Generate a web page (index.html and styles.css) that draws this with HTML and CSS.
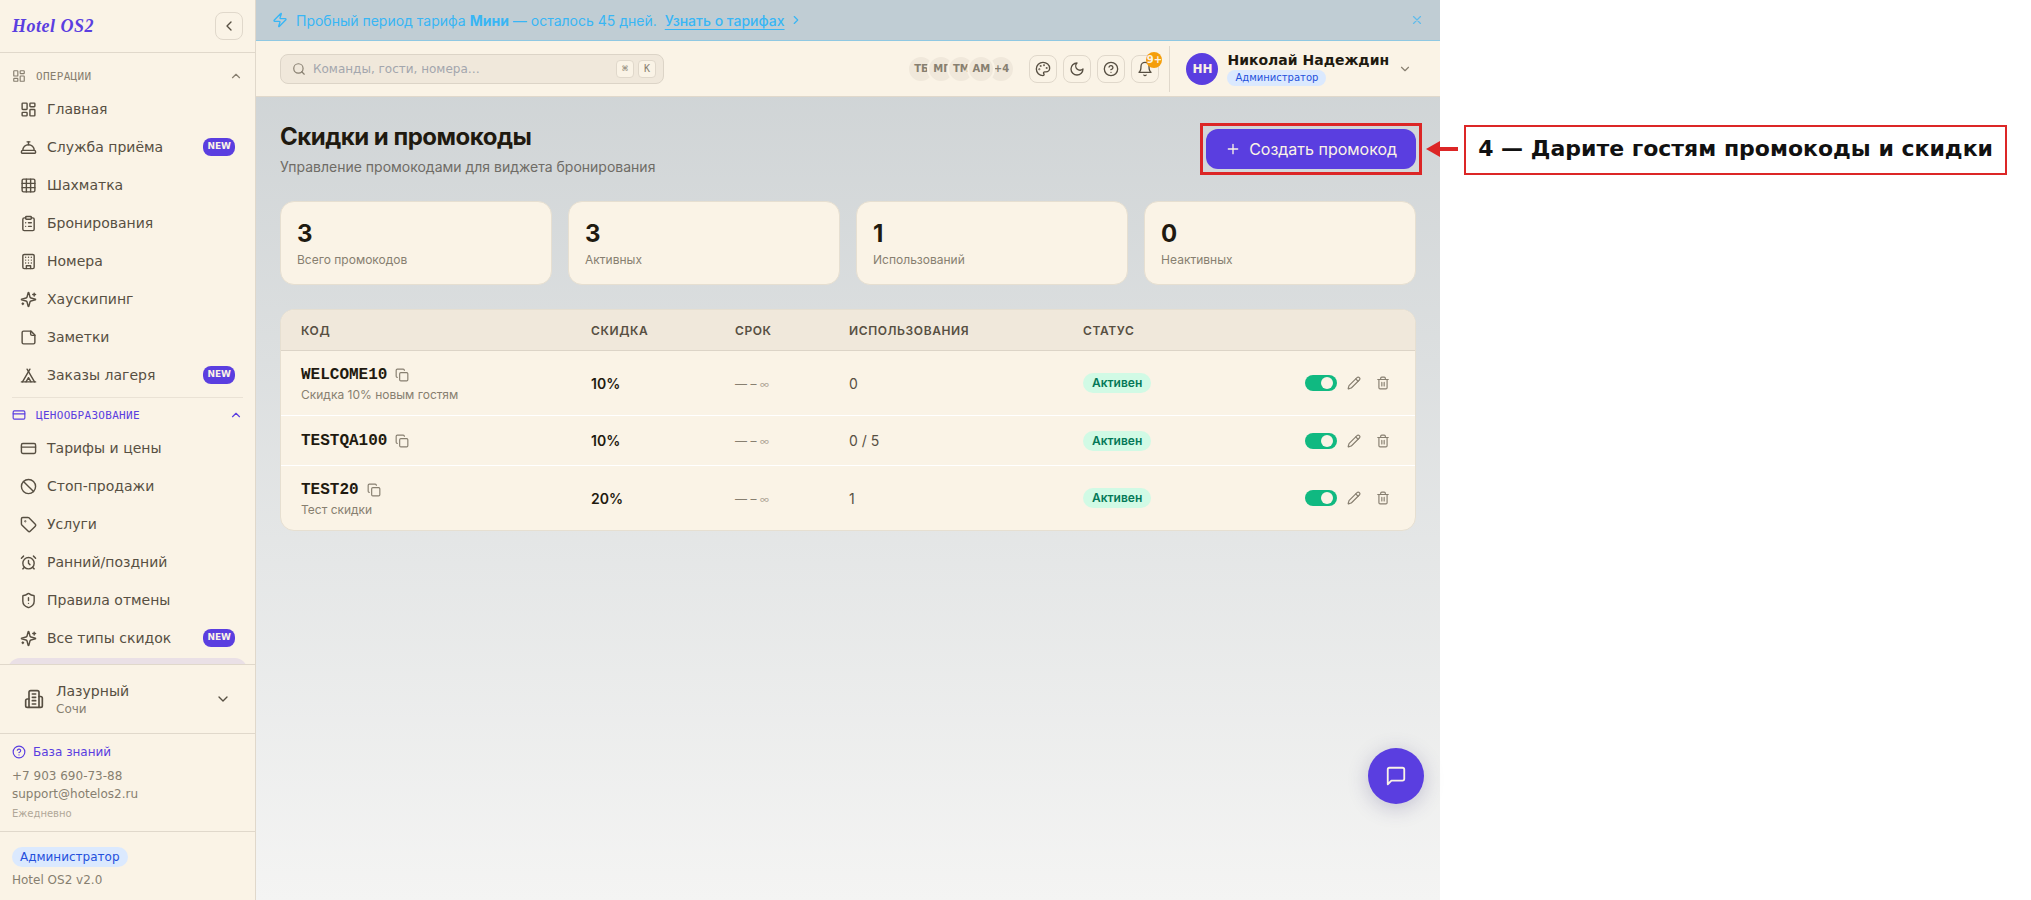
FILE: index.html
```html
<!DOCTYPE html>
<html lang="ru">
<head>
  <meta charset="UTF-8">
  <meta name="viewport" content="width=device-width, initial-scale=1.0">
  <title>Скидки и промокоды — Hotel OS2</title>
  <link rel="stylesheet" href="styles.css">
</head>
<body>
  <!-- Icon sprite -->
  <svg class="sprite" aria-hidden="true">
    <symbol id="i-dashboard" viewBox="0 0 24 24"><rect x="3" y="3" width="7" height="9" rx="1"/><rect x="14" y="3" width="7" height="5" rx="1"/><rect x="14" y="12" width="7" height="9" rx="1"/><rect x="3" y="16" width="7" height="5" rx="1"/></symbol>
    <symbol id="i-bell-service" viewBox="0 0 24 24"><path d="M3 20a1 1 0 0 1-1-1v-1a2 2 0 0 1 2-2h16a2 2 0 0 1 2 2v1a1 1 0 0 1-1 1Z"/><path d="M20 16a8 8 0 1 0-16 0"/><path d="M12 4v4"/><path d="M10 4h4"/></symbol>
    <symbol id="i-grid" viewBox="0 0 24 24"><rect x="3" y="3" width="18" height="18" rx="2"/><path d="M3 9h18M3 15h18M9 3v18M15 3v18"/></symbol>
    <symbol id="i-clipboard" viewBox="0 0 24 24"><rect x="8" y="2" width="8" height="4" rx="1"/><path d="M16 4h2a2 2 0 0 1 2 2v14a2 2 0 0 1-2 2H6a2 2 0 0 1-2-2V6a2 2 0 0 1 2-2h2"/><path d="M12 11h4M12 16h4M8 11h.01M8 16h.01"/></symbol>
    <symbol id="i-hotel" viewBox="0 0 24 24"><rect x="4" y="2" width="16" height="20" rx="2"/><path d="M9 22v-4h6v4"/><path d="M8 6h.01M16 6h.01M12 6h.01M12 10h.01M12 14h.01M16 10h.01M16 14h.01M8 10h.01M8 14h.01"/></symbol>
    <symbol id="i-sparkles" viewBox="0 0 24 24"><path d="M9.937 15.5A2 2 0 0 0 8.5 14.063l-6.135-1.582a.5.5 0 0 1 0-.962L8.5 9.936A2 2 0 0 0 9.937 8.5l1.582-6.135a.5.5 0 0 1 .963 0L14.063 8.5A2 2 0 0 0 15.5 9.937l6.135 1.581a.5.5 0 0 1 0 .964L15.5 14.063a2 2 0 0 0-1.437 1.437l-1.582 6.135a.5.5 0 0 1-.963 0z"/><path d="M20 3v4M22 5h-4M4 17v2M5 18H3"/></symbol>
    <symbol id="i-note" viewBox="0 0 24 24"><path d="M15.5 3H5a2 2 0 0 0-2 2v14a2 2 0 0 0 2 2h14a2 2 0 0 0 2-2V8.500Z"/><path d="M15 3v4a2 2 0 0 0 2 2h4"/></symbol>
    <symbol id="i-tent" viewBox="0 0 24 24"><path d="M3.500 21 14 3"/><path d="M20.500 21 10 3"/><path d="M15.500 21 12 15l-3.500 6"/><path d="M2 21h20"/></symbol>
    <symbol id="i-card" viewBox="0 0 24 24"><rect x="2" y="5" width="20" height="14" rx="2"/><path d="M2 10h20"/></symbol>
    <symbol id="i-ban" viewBox="0 0 24 24"><circle cx="12" cy="12" r="10"/><path d="m4.900 4.900 14.200 14.200"/></symbol>
    <symbol id="i-tag" viewBox="0 0 24 24"><path d="M12.586 2.586A2 2 0 0 0 11.172 2H4a2 2 0 0 0-2 2v7.172a2 2 0 0 0 .586 1.414l8.704 8.704a2.426 2.426 0 0 0 3.420 0l6.580-6.580a2.426 2.426 0 0 0 0-3.420z"/><circle cx="7.500" cy="7.500" r=".5"/></symbol>
    <symbol id="i-alarm" viewBox="0 0 24 24"><circle cx="12" cy="13" r="8"/><path d="M12 9v4l2 2"/><path d="M5 3 2 6M22 6l-3-3M6.380 18.700 4 21M17.640 18.670 20 21"/></symbol>
    <symbol id="i-shield" viewBox="0 0 24 24"><path d="M20 13c0 5-3.500 7.500-7.660 8.950a1 1 0 0 1-.67-.01C7.500 20.500 4 18 4 13V6a1 1 0 0 1 1-1c2 0 4.500-1.200 6.240-2.720a1.170 1.170 0 0 1 1.520 0C14.510 3.810 17 5 19 5a1 1 0 0 1 1 1z"/><path d="M12 8v4M12 16h.01"/></symbol>
    <symbol id="i-building" viewBox="0 0 24 24"><path d="M6 22V4a2 2 0 0 1 2-2h8a2 2 0 0 1 2 2v18Z"/><path d="M6 12H4a2 2 0 0 0-2 2v6a2 2 0 0 0 2 2h2"/><path d="M18 9h2a2 2 0 0 1 2 2v9a2 2 0 0 1-2 2h-2"/><path d="M10 6h4M10 10h4M10 14h4M10 18h4"/></symbol>
    <symbol id="i-help" viewBox="0 0 24 24"><circle cx="12" cy="12" r="10"/><path d="M9.090 9a3 3 0 0 1 5.830 1c0 2-3 3-3 3"/><path d="M12 17h.01"/></symbol>
    <symbol id="i-zap" viewBox="0 0 24 24"><path d="M4 14a1 1 0 0 1-.78-1.630l9.900-10.200a.5.5 0 0 1 .86.46l-1.920 6.020A1 1 0 0 0 13 10h7a1 1 0 0 1 .78 1.630l-9.900 10.200a.5.5 0 0 1-.86-.46l1.920-6.020A1 1 0 0 0 11 14z"/></symbol>
    <symbol id="i-search" viewBox="0 0 24 24"><circle cx="11" cy="11" r="8"/><path d="m21 21-4.300-4.300"/></symbol>
    <symbol id="i-palette" viewBox="0 0 24 24"><circle cx="13.500" cy="6.500" r=".5"/><circle cx="17.500" cy="10.500" r=".5"/><circle cx="8.500" cy="7.500" r=".5"/><circle cx="6.500" cy="12.500" r=".5"/><path d="M12 2C6.500 2 2 6.500 2 12s4.500 10 10 10c.926 0 1.648-.746 1.648-1.688 0-.437-.18-.835-.437-1.125-.29-.289-.438-.652-.438-1.125a1.640 1.640 0 0 1 1.668-1.668h1.996c3.051 0 5.555-2.503 5.555-5.554C21.965 6.012 17.461 2 12 2z"/></symbol>
    <symbol id="i-moon" viewBox="0 0 24 24"><path d="M12 3a6 6 0 0 0 9 9 9 9 0 1 1-9-9Z"/></symbol>
    <symbol id="i-bell" viewBox="0 0 24 24"><path d="M6 8a6 6 0 0 1 12 0c0 7 3 9 3 9H3s3-2 3-9"/><path d="M10.300 21a1.940 1.940 0 0 0 3.400 0"/></symbol>
    <symbol id="i-plus" viewBox="0 0 24 24"><path d="M5 12h14M12 5v14"/></symbol>
    <symbol id="i-close" viewBox="0 0 24 24"><path d="M18 6 6 18M6 6l12 12"/></symbol>
    <symbol id="i-copy" viewBox="0 0 24 24"><rect x="8" y="8" width="14" height="14" rx="2"/><path d="M4 16c-1.100 0-2-.9-2-2V4c0-1.100.9-2 2-2h10c1.100 0 2 .9 2 2"/></symbol>
    <symbol id="i-pencil" viewBox="0 0 24 24"><path d="M21.174 6.812a1 1 0 0 0-3.986-3.987L3.842 16.174a2 2 0 0 0-.5.830l-1.321 4.352a.5.5 0 0 0 .623.622l4.353-1.320a2 2 0 0 0 .830-.497z"/><path d="m15 5 4 4"/></symbol>
    <symbol id="i-trash" viewBox="0 0 24 24"><path d="M3 6h18M19 6v14c0 1-1 2-2 2H7c-1 0-2-1-2-2V6M8 6V4c0-1 1-2 2-2h4c1 0 2 1 2 2v2M10 11v6M14 11v6"/></symbol>
    <symbol id="i-chat" viewBox="0 0 24 24"><path d="M21 15a2 2 0 0 1-2 2H7l-4 4V5a2 2 0 0 1 2-2h14a2 2 0 0 1 2 2z"/></symbol>
    <symbol id="i-left" viewBox="0 0 24 24"><path d="m15 18-6-6 6-6"/></symbol>
    <symbol id="i-right" viewBox="0 0 24 24"><path d="m9 18 6-6-6-6"/></symbol>
    <symbol id="i-up" viewBox="0 0 24 24"><path d="m18 15-6-6-6 6"/></symbol>
    <symbol id="i-down" viewBox="0 0 24 24"><path d="m6 9 6 6 6-6"/></symbol>
  </svg>

  <div class="layout">
    <div class="app">
      <aside class="sidebar">
        <div class="sidebar-header">
          <a class="logo" href="#">Hotel OS2</a>
          <button class="collapse-btn" type="button" aria-label="Свернуть меню"><svg class="icon icon-16"><use href="#i-left"/></svg></button>
        </div>

        <nav class="sidebar-nav">
          <div class="nav-section">
            <button class="section-title" type="button"><svg class="icon icon-14"><use href="#i-dashboard"/></svg><span>ОПЕРАЦИИ</span><svg class="icon icon-14 chevron"><use href="#i-up"/></svg></button>
            <a class="nav-item" href="#"><svg class="icon icon-17"><use href="#i-dashboard"/></svg>Главная</a>
            <a class="nav-item" href="#"><svg class="icon icon-17"><use href="#i-bell-service"/></svg>Служба приёма<span class="new-badge">NEW</span></a>
            <a class="nav-item" href="#"><svg class="icon icon-17"><use href="#i-grid"/></svg>Шахматка</a>
            <a class="nav-item" href="#"><svg class="icon icon-17"><use href="#i-clipboard"/></svg>Бронирования</a>
            <a class="nav-item" href="#"><svg class="icon icon-17"><use href="#i-hotel"/></svg>Номера</a>
            <a class="nav-item" href="#"><svg class="icon icon-17"><use href="#i-sparkles"/></svg>Хаускипинг</a>
            <a class="nav-item" href="#"><svg class="icon icon-17"><use href="#i-note"/></svg>Заметки</a>
            <a class="nav-item" href="#"><svg class="icon icon-17"><use href="#i-tent"/></svg>Заказы лагеря<span class="new-badge">NEW</span></a>
          </div>
          <div class="nav-section current">
            <button class="section-title" type="button"><svg class="icon icon-14"><use href="#i-card"/></svg><span>ЦЕНООБРАЗОВАНИЕ</span><svg class="icon icon-14 chevron"><use href="#i-up"/></svg></button>
            <a class="nav-item" href="#"><svg class="icon icon-17"><use href="#i-card"/></svg>Тарифы и цены</a>
            <a class="nav-item" href="#"><svg class="icon icon-17"><use href="#i-ban"/></svg>Стоп-продажи</a>
            <a class="nav-item" href="#"><svg class="icon icon-17"><use href="#i-tag"/></svg>Услуги</a>
            <a class="nav-item" href="#"><svg class="icon icon-17"><use href="#i-alarm"/></svg>Ранний/поздний</a>
            <a class="nav-item" href="#"><svg class="icon icon-17"><use href="#i-shield"/></svg>Правила отмены</a>
            <a class="nav-item" href="#"><svg class="icon icon-17"><use href="#i-sparkles"/></svg>Все типы скидок<span class="new-badge">NEW</span></a>
            <a class="nav-item active" href="#" aria-current="page"></a>
          </div>
        </nav>

        <button class="hotel-switch" type="button">
          <svg class="icon icon-20"><use href="#i-building"/></svg>
          <span class="hotel-info"><span class="hotel-name">Лазурный</span><span class="hotel-city">Сочи</span></span>
          <svg class="icon icon-16 chevron"><use href="#i-down"/></svg>
        </button>

        <div class="support">
          <a class="support-link" href="#"><svg class="icon icon-14"><use href="#i-help"/></svg>База знаний</a>
          <a class="contact" href="tel:+79036907388">+7 903 690-73-88</a>
          <a class="contact" href="mailto:support@hotelos2.ru">support@hotelos2.ru</a>
          <span class="hours">Ежедневно</span>
        </div>

        <div class="sidebar-footer">
          <span class="role-badge role-large">Администратор</span>
          <span class="version">Hotel OS2 v2.0</span>
        </div>
      </aside>

      <div class="main">
        <div class="trial-banner">
          <svg class="icon icon-16"><use href="#i-zap"/></svg>
          <span>Пробный период тарифа <b>Мини</b> — осталось 45 дней.</span>
          <a class="trial-link" href="#">Узнать о тарифах</a>
          <svg class="icon icon-14"><use href="#i-right"/></svg>
          <button class="banner-close" type="button" aria-label="Закрыть"><svg class="icon icon-14"><use href="#i-close"/></svg></button>
        </div>

        <header class="topbar">
          <label class="search">
            <svg class="icon icon-14"><use href="#i-search"/></svg>
            <input type="text" placeholder="Команды, гости, номера…" aria-label="Поиск">
            <kbd>⌘</kbd><kbd>K</kbd>
          </label>
          <div class="team">
            <span class="member">ТБ</span><span class="member">МГ</span><span class="member">ТМ</span><span class="member top">АМ</span><span class="member">+4</span>
          </div>
          <div class="tools">
            <button class="tool-btn" type="button" aria-label="Тема"><svg class="icon icon-16"><use href="#i-palette"/></svg></button>
            <button class="tool-btn" type="button" aria-label="Ночной режим"><svg class="icon icon-16"><use href="#i-moon"/></svg></button>
            <button class="tool-btn" type="button" aria-label="Справка"><svg class="icon icon-16"><use href="#i-help"/></svg></button>
            <button class="tool-btn" type="button" aria-label="Уведомления"><svg class="icon icon-16"><use href="#i-bell"/></svg><span class="count">9+</span></button>
          </div>
          <button class="profile" type="button">
            <span class="avatar">НН</span>
            <span class="profile-info"><span class="profile-name">Николай Надеждин</span><span class="role-badge">Администратор</span></span>
            <svg class="icon icon-14"><use href="#i-down"/></svg>
          </button>
        </header>

        <main class="content">
          <div class="page-header">
            <div>
              <h1>Скидки и промокоды</h1>
              <p class="subtitle">Управление промокодами для виджета бронирования</p>
            </div>
            <div class="highlight">
              <button class="create-btn" type="button"><svg class="icon icon-16"><use href="#i-plus"/></svg>Создать промокод</button>
              <svg class="arrow" viewBox="0 0 32 16"><path d="M0 8 14 0v6h18v4H14v6z"/></svg>
            </div>
          </div>

          <div class="stats">
            <div class="stat-card"><div class="stat-value">3</div><div class="stat-label">Всего промокодов</div></div>
            <div class="stat-card"><div class="stat-value">3</div><div class="stat-label">Активных</div></div>
            <div class="stat-card"><div class="stat-value">1</div><div class="stat-label">Использований</div></div>
            <div class="stat-card"><div class="stat-value">0</div><div class="stat-label">Неактивных</div></div>
          </div>

          <div class="table-card">
            <table>
              <thead>
                <tr><th class="col-code">КОД</th><th class="col-discount">СКИДКА</th><th class="col-term">СРОК</th><th class="col-usage">ИСПОЛЬЗОВАНИЯ</th><th class="col-status">СТАТУС</th><th class="col-actions" aria-label="Действия"></th></tr>
              </thead>
              <tbody>
                <tr>
                  <td><div class="code">WELCOME10<button class="copy-btn" type="button" aria-label="Копировать"><svg class="icon icon-14"><use href="#i-copy"/></svg></button></div><div class="note">Скидка 10% новым гостям</div></td>
                  <td class="discount">10%</td>
                  <td class="term">— – <span class="infinity">∞</span></td>
                  <td>0</td>
                  <td><span class="status">Активен</span></td>
                  <td><div class="actions"><input class="toggle" type="checkbox" role="switch" aria-label="WELCOME10" checked><button type="button" aria-label="Изменить"><svg class="icon icon-14"><use href="#i-pencil"/></svg></button><button type="button" aria-label="Удалить"><svg class="icon icon-14"><use href="#i-trash"/></svg></button></div></td>
                </tr>
                <tr>
                  <td><div class="code">TESTQA100<button class="copy-btn" type="button" aria-label="Копировать"><svg class="icon icon-14"><use href="#i-copy"/></svg></button></div></td>
                  <td class="discount">10%</td>
                  <td class="term">— – <span class="infinity">∞</span></td>
                  <td>0 / 5</td>
                  <td><span class="status">Активен</span></td>
                  <td><div class="actions"><input class="toggle" type="checkbox" role="switch" aria-label="TESTQA100" checked><button type="button" aria-label="Изменить"><svg class="icon icon-14"><use href="#i-pencil"/></svg></button><button type="button" aria-label="Удалить"><svg class="icon icon-14"><use href="#i-trash"/></svg></button></div></td>
                </tr>
                <tr>
                  <td><div class="code">TEST20<button class="copy-btn" type="button" aria-label="Копировать"><svg class="icon icon-14"><use href="#i-copy"/></svg></button></div><div class="note">Тест скидки</div></td>
                  <td class="discount">20%</td>
                  <td class="term">— – <span class="infinity">∞</span></td>
                  <td>1</td>
                  <td><span class="status">Активен</span></td>
                  <td><div class="actions"><input class="toggle" type="checkbox" role="switch" aria-label="TEST20" checked><button type="button" aria-label="Изменить"><svg class="icon icon-14"><use href="#i-pencil"/></svg></button><button type="button" aria-label="Удалить"><svg class="icon icon-14"><use href="#i-trash"/></svg></button></div></td>
                </tr>
              </tbody>
            </table>
          </div>
        </main>

        <button class="chat-btn" type="button" aria-label="Чат"><svg class="icon icon-22"><use href="#i-chat"/></svg></button>
      </div>
    </div>

    <!-- Guide step -->
    <div class="guide">
      <div class="guide-note">4 — Дарите гостям промокоды и скидки</div>
    </div>
  </div>
</body>
</html>
```

FILE: styles.css
```css
* {
  box-sizing: border-box;
}

body {
  margin: 0;
  background: #fff;
  color: #1f1a10;
  font-family: Inter, "DejaVu Sans", sans-serif;
  font-size: 14px;
}

button {
  font: inherit;
  color: inherit;
  background: none;
  border: 0;
  padding: 0;
  cursor: pointer;
}

a {
  color: inherit;
  text-decoration: none;
}

/* Icons */
.sprite {
  display: none;
}

.icon {
  display: block;
  flex: none;
  fill: none;
  stroke: currentColor;
  stroke-width: 2;
  stroke-linecap: round;
  stroke-linejoin: round;
}

.icon-14 { width: 14px; height: 14px; }
.icon-16 { width: 16px; height: 16px; }
.icon-17 { width: 17px; height: 17px; }
.icon-20 { width: 20px; height: 20px; }
.icon-22 { width: 22px; height: 22px; }

.layout {
  display: flex;
  min-height: 100vh;
}

.app {
  flex: 1;
  display: flex;
  min-width: 0;
}

/* Sidebar */
.sidebar {
  width: 256px;
  flex: none;
  height: 100vh;
  display: flex;
  flex-direction: column;
  background: #faf3e6;
  border-right: 1px solid #e0d8cb;
  color: #574f42;
  font-family: "DejaVu Sans", sans-serif;
}

.sidebar-header {
  display: flex;
  align-items: center;
  justify-content: space-between;
  padding: 12px;
  border-bottom: 1px solid #e0d8cb;
}

.logo {
  font-family: "Liberation Serif", serif;
  font-size: 18px;
  font-style: italic;
  font-weight: bold;
  letter-spacing: 0.5px;
  color: #5a3ee0;
}

.collapse-btn {
  width: 28px;
  height: 28px;
  display: flex;
  align-items: center;
  justify-content: center;
  border: 1px solid #e0d8cb;
  border-radius: 8px;
}

.sidebar-nav {
  flex: 1;
  min-height: 0;
  overflow: hidden;
  padding: 8px;
}

.nav-section {
  display: flex;
  flex-direction: column;
}

.nav-section.current {
  margin-top: 2px;
}

.nav-section.current::before {
  content: "";
  height: 1px;
  margin: 0 4px 2px;
  background: #eae2d5;
}

.section-title {
  display: flex;
  align-items: center;
  gap: 10px;
  height: 30px;
  padding: 0 4px;
  color: #877f70;
  font-family: "DejaVu Sans Mono", monospace;
  font-size: 11px;
  letter-spacing: 0.3px;
}

.current .section-title {
  color: #5a3ee0;
}

.chevron {
  margin-left: auto;
}

.nav-item {
  display: flex;
  align-items: center;
  gap: 10px;
  height: 36px;
  flex: none;
  margin-bottom: 2px;
  padding: 0 12px;
  border-radius: 12px;
}

.nav-item.active {
  background: #eae0e6;
}

.new-badge {
  height: 18px;
  margin-left: auto;
  padding: 0 4px;
  border-radius: 8px;
  background: #5a3ee0;
  color: #faf3e6;
  font-size: 9px;
  font-weight: bold;
  line-height: 16px;
}

.hotel-switch {
  display: flex;
  align-items: center;
  gap: 12px;
  height: 69px;
  padding: 0 24px;
  border-top: 1px solid #e0d8cb;
  text-align: left;
}

.hotel-info {
  display: flex;
  flex-direction: column;
  gap: 1px;
}

.hotel-name {
  line-height: 18px;
}

.hotel-city {
  font-size: 12px;
  line-height: 16px;
  color: #877f70;
}

.support {
  display: flex;
  flex-direction: column;
  height: 98px;
  padding: 9px 12px;
  border-top: 1px solid #e0d8cb;
  color: #877f70;
  font-size: 12px;
  line-height: 18px;
}

.support-link {
  display: flex;
  align-items: center;
  gap: 7px;
  margin-bottom: 6px;
  color: #5a3ee0;
}

.hours {
  margin-top: 2px;
  color: #b0a798;
  font-size: 10px;
}

.sidebar-footer {
  display: flex;
  flex-direction: column;
  align-items: flex-start;
  gap: 4px;
  height: 69px;
  padding: 15px 12px;
  border-top: 1px solid #e0d8cb;
  font-size: 12px;
}

.version {
  color: #877f70;
  line-height: 18px;
}

.role-badge {
  padding: 0 8px;
  border-radius: 10px;
  background: #dbe9fe;
  color: #2450dc;
  font-size: 10px;
  line-height: 16px;
}

.role-large {
  font-size: 12px;
  line-height: 20px;
}

/* Main column */
.main {
  position: relative;
  flex: 1;
  min-width: 0;
  display: flex;
  flex-direction: column;
  background: linear-gradient(#ccd1d3, #f4f4f3);
}

.trial-banner {
  display: flex;
  align-items: center;
  gap: 8px;
  height: 41px;
  padding: 0 16px;
  background: #c0cdd4;
  border-bottom: 1px solid #8fc8e2;
  color: #38b6f5;
}

.trial-link {
  font-weight: 500;
  text-decoration: underline;
  text-underline-offset: 3px;
}

.trial-link + .icon {
  margin-left: -4px;
}

.banner-close {
  margin-left: auto;
  opacity: 0.7;
}

.topbar {
  display: flex;
  align-items: center;
  height: 56px;
  padding: 0 24px;
  background: #faf3e6;
  border-bottom: 1px solid #e0d8cb;
  font-family: "DejaVu Sans", sans-serif;
}

.search {
  display: flex;
  align-items: center;
  gap: 4px;
  width: 384px;
  height: 30px;
  padding: 0 7px 0 11px;
  border: 1px solid #dcd4c7;
  border-radius: 8px;
  background: #f0e8db;
  color: #877f70;
}

.search input {
  flex: 1;
  min-width: 0;
  padding: 0 3px;
  border: 0;
  outline: 0;
  background: none;
  font: 12px "DejaVu Sans", sans-serif;
}

.search input::placeholder {
  color: #a3a6ad;
}

kbd {
  width: 18px;
  height: 18px;
  border: 1px solid #e0d8cb;
  border-radius: 4px;
  background: #faf3e6;
  font: 10px/16px "DejaVu Sans Mono", monospace;
  text-align: center;
}

.team {
  display: flex;
  margin-left: auto;
}

.member {
  width: 28px;
  height: 28px;
  margin-left: -8px;
  border: 2px solid #faf3e6;
  border-radius: 50%;
  background: #f0e8db;
  color: #877f70;
  font-size: 10px;
  font-weight: bold;
  line-height: 23px;
  text-align: center;
  white-space: nowrap;
}

.member.top {
  position: relative;
}

.tools {
  display: flex;
  gap: 6px;
  margin-left: 14px;
  padding-right: 10px;
}

.tool-btn {
  position: relative;
  display: flex;
  align-items: center;
  justify-content: center;
  width: 28px;
  height: 28px;
  border: 1px solid #e0d8cb;
  border-radius: 8px;
  color: #574f42;
}

.count {
  position: absolute;
  top: -4px;
  right: -4px;
  width: 16px;
  height: 16px;
  border-radius: 50%;
  background: #f59e0b;
  color: #faf3e6;
  font-size: 10px;
  font-weight: bold;
  line-height: 16px;
  text-align: center;
}

.profile {
  display: flex;
  align-items: center;
  gap: 9px;
  height: 46px;
  padding: 0 4px 0 16px;
  border-left: 1px solid #e0d8cb;
  color: #877f70;
}

.avatar {
  width: 32px;
  height: 32px;
  border-radius: 50%;
  background: #5a3ee0;
  color: #faf3e6;
  font-size: 12px;
  font-weight: bold;
  line-height: 32px;
  text-align: center;
}

.profile-info {
  display: flex;
  flex-direction: column;
  align-items: flex-start;
  gap: 2px;
}

.profile-name {
  color: #1f1a10;
  font-size: 14px;
  font-weight: bold;
  line-height: 16px;
}

.content {
  padding: 24px;
}

.page-header {
  display: flex;
  align-items: center;
  justify-content: space-between;
  margin-bottom: 24px;
}

h1 {
  margin: 0;
  font-size: 24px;
  font-weight: 700;
  line-height: 32px;
  letter-spacing: -0.5px;
}

.subtitle {
  margin: 4px 0 0;
  color: #6f6c66;
  line-height: 20px;
}

.highlight {
  position: relative;
  outline: 3px solid #dc2626;
  outline-offset: 3px;
}

.create-btn {
  display: flex;
  align-items: center;
  gap: 8px;
  height: 40px;
  padding: 0 19px;
  border-radius: 12px;
  background: #5a3ee0;
  color: #faf3e6;
  font-size: 16px;
}

.arrow {
  position: absolute;
  left: calc(100% + 10px);
  top: 12px;
  width: 32px;
  height: 16px;
  fill: #dc2626;
  z-index: 2;
}

.stats {
  display: grid;
  grid-template-columns: repeat(4, 1fr);
  gap: 16px;
  margin-bottom: 24px;
}

.stat-card {
  padding: 16px;
  border: 1px solid #e6dfd1;
  border-radius: 14px;
  background: #faf3e6;
}

.stat-value {
  font-size: 24px;
  font-weight: 700;
  line-height: 32px;
}

.stat-label {
  margin-top: 2px;
  color: #877f70;
  font-size: 12px;
  line-height: 16px;
}

/* Promo code table */
.table-card {
  overflow: hidden;
  border: 1px solid #e6dfd1;
  border-radius: 14px;
  background: #faf3e6;
}

table {
  width: 100%;
  table-layout: fixed;
  border-collapse: separate;
  border-spacing: 0;
}

.col-code { width: 290px; }
.col-discount { width: 144px; }
.col-term { width: 114px; }
.col-usage { width: 234px; }

th {
  height: 41px;
  padding: 0 20px;
  background: #f0e8db;
  border-bottom: 1px solid #dcd4c7;
  color: #574f42;
  font-size: 12px;
  font-weight: 600;
  letter-spacing: 0.6px;
  text-align: left;
}

td {
  padding: 12px 20px;
  border-bottom: 1px solid #fff;
  color: #574f42;
  vertical-align: middle;
}

tbody tr:last-child td {
  border-bottom: 0;
}

.code {
  display: flex;
  align-items: center;
  gap: 8px;
  color: #1f1a10;
  font-family: "Liberation Mono", monospace;
  font-size: 16px;
  font-weight: bold;
  line-height: 24px;
}

.copy-btn {
  color: #877f70;
}

.note {
  color: #877f70;
  font-size: 12px;
  line-height: 16px;
}

.discount {
  color: #1f1a10;
  font-weight: 600;
}

.term {
  color: #877f70;
  font-size: 12px;
}

.infinity {
  color: #b0a798;
  font-size: 10px;
}

.status {
  display: inline-block;
  padding: 0 9px;
  border-radius: 10px;
  background: #d1fae5;
  color: #047857;
  font-size: 12px;
  font-weight: 600;
  line-height: 20px;
}

.actions {
  display: flex;
  align-items: center;
  justify-content: flex-end;
  gap: 4px;
  color: #877f70;
}

.actions button {
  display: flex;
  align-items: center;
  justify-content: center;
  width: 25px;
  height: 25px;
}

.toggle {
  appearance: none;
  display: flex;
  align-items: center;
  width: 32px;
  height: 16px;
  margin: 0;
  padding: 0 4px;
  border-radius: 8px;
  background: #c9c2b5;
  cursor: pointer;
}

.toggle::before {
  content: "";
  width: 12px;
  height: 12px;
  border-radius: 50%;
  background: #faf3e6;
}

.toggle:checked {
  justify-content: flex-end;
  background: #10b981;
}

.chat-btn {
  position: absolute;
  right: 16px;
  bottom: 96px;
  display: flex;
  align-items: center;
  justify-content: center;
  width: 56px;
  height: 56px;
  border-radius: 50%;
  background: #5a3ee0;
  color: #faf3e6;
  box-shadow: 0 4px 20px rgba(60, 50, 120, 0.25);
}

/* Guide step beside the app */
.guide {
  flex: none;
  padding: 125px 24px 0;
}

.guide-note {
  padding: 0 12px 2px;
  border: 2px solid #dc2626;
  background: #fff;
  color: #111;
  font-family: "DejaVu Sans", sans-serif;
  font-size: 22px;
  font-weight: bold;
  line-height: 44px;
  white-space: nowrap;
}
```
